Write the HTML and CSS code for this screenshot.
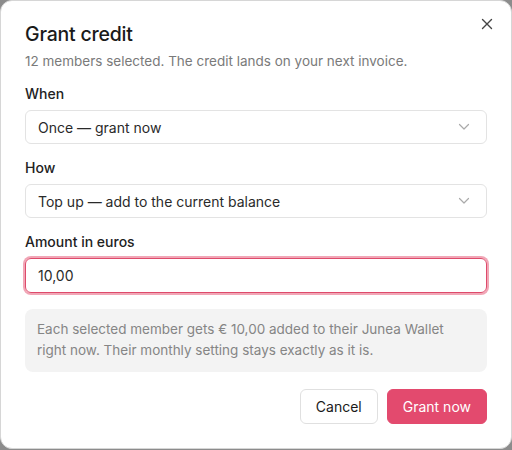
FILE: index.html
```html
<!DOCTYPE html>
<html lang="en">
<head>
<meta charset="utf-8">
<link rel="stylesheet" href="styles.css">
</head>
<body>
<div class="dialog">
  <div class="head">
    <h1 class="title">Grant credit</h1>
    <button class="close" aria-label="Close">
      <svg width="12" height="12" viewBox="0 0 12 12"><path d="M1.5 1.5l9 9M10.5 1.5l-9 9" stroke="#444" stroke-width="1.4" stroke-linecap="round"/></svg>
    </button>
  </div>
  <p class="sub">12 members selected. The credit lands on your next invoice.</p>

  <div class="field">
    <label class="label">When</label>
    <div class="select"><span>Once — grant now</span>
      <svg width="12" height="8" viewBox="0 0 12 8"><path d="M1.5 1.5l4.5 4.5 4.5-4.5" fill="none" stroke="#aaa" stroke-width="1.2" stroke-linecap="round" stroke-linejoin="round"/></svg>
    </div>
  </div>

  <div class="field">
    <label class="label">How</label>
    <div class="select"><span>Top up — add to the current balance</span>
      <svg width="12" height="8" viewBox="0 0 12 8"><path d="M1.5 1.5l4.5 4.5 4.5-4.5" fill="none" stroke="#aaa" stroke-width="1.2" stroke-linecap="round" stroke-linejoin="round"/></svg>
    </div>
  </div>

  <div class="field">
    <label class="label">Amount in euros</label>
    <div class="input">10,00</div>
  </div>

  <div class="note">Each selected member gets € 10,00 added to their Junea Wallet right now. Their monthly setting stays exactly as it is.</div>

  <div class="actions">
    <button class="btn btn-secondary">Cancel</button>
    <button class="btn btn-primary">Grant now</button>
  </div>
</div>
</body>
</html>
```
FILE: styles.css
```css
* { box-sizing: border-box; }
html, body { margin: 0; height: 100%; }
body {
  background: #8c8c8c;
  font-family: Inter, "Noto Sans", sans-serif;
  color: #1f1f1f;
}
.dialog {
  width: 512px;
  height: 449px;
  background: #fff;
  border: 1px solid #d6d6d6;
  border-radius: 12px;
  padding: 21px 24px 24px 24px;
  display: flex;
  flex-direction: column;
}
.head {
  display: flex;
  justify-content: space-between;
  align-items: center;
  height: 24px;
}
.title {
  margin: 0;
  font-size: 19.5px;
  font-weight: 500;
  letter-spacing: -0.2px;
  color: #1a1a1a;
}
.close {
  border: 0;
  background: none;
  padding: 0;
  width: 12px;
  height: 12px;
  margin-right: -6px;
  margin-top: -20px;
  display: flex;
}
.sub {
  margin: 5px 0 0 0;
  font-size: 13.5px;
  line-height: 20px;
  color: #7a7a7a;
}
.field {
  display: flex;
  flex-direction: column;
  margin-top: 15px;
}
.sub + .field { margin-top: 14px; }
.label {
  font-size: 14px;
  line-height: 18px;
  font-weight: 500;
  color: #222;
  margin-bottom: 7px;
}
.select {
  height: 34px;
  border: 1px solid #e3e3e3;
  border-radius: 6px;
  display: flex;
  align-items: center;
  justify-content: space-between;
  padding: 0 16px 0 12px;
  font-size: 14px;
  color: #2a2a2a;
}
.input {
  height: 35px;
  border: 1px solid #de4a6b;
  border-radius: 6px;
  box-shadow: 0 0 0 2px #f1a6b6;
  display: flex;
  align-items: center;
  padding: 0 12px;
  font-size: 14px;
  color: #2a2a2a;
}
.note {
  margin-top: 16px;
  background: #f3f3f3;
  border-radius: 8px;
  padding: 10px 12px 11px;
  font-size: 13.5px;
  line-height: 21px;
  color: #858585;
}
.actions {
  margin-top: 17px;
  display: flex;
  justify-content: flex-end;
  gap: 9px;
}
.btn {
  height: 35px;
  border-radius: 6px;
  font-family: inherit;
  font-size: 14px;
  padding: 0 15px;
}
.btn-secondary {
  background: #fff;
  border: 1px solid #e0e0e0;
  color: #1a1a1a;
}
.btn-primary {
  background: #e34a6e;
  border: 1px solid #e34a6e;
  color: #fff;
}
```
